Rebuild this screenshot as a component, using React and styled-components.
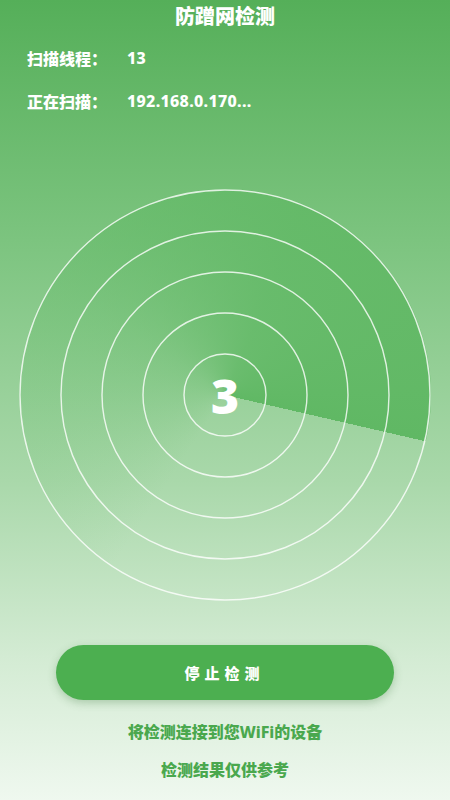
import styled, { createGlobalStyle } from 'styled-components'

const GlobalStyle = createGlobalStyle`
  html, body {
    margin: 0;
    padding: 0;
  }
  body {
    font-family: "Noto Sans", "Noto Sans CJK SC", sans-serif;
  }
`

const Page = styled.div`
  width: 450px;
  height: 800px;
  overflow: hidden;
  display: flex;
  flex-direction: column;
  background: linear-gradient(180deg, #55af59 0%, #7cc47f 30%, #a9d8aa 60%, #d3ebd3 82%, #eff8ef 100%);
`

const Title = styled.h1`
  margin: 0;
  height: 34px;
  line-height: 34px;
  text-align: center;
  color: #fff;
  font-size: 20px;
  font-weight: 800;
`

const InfoRow = styled.div`
  display: flex;
  align-items: center;
  height: 24px;
  padding: 0 27px;
  margin-top: ${props => props.gap}px;
  color: #fff;
  font-size: 16px;
  font-weight: 800;
`

const Label = styled.span`
  width: 100px;
`

const Value = styled.span`
  letter-spacing: 0.3px;
`

const Radar = styled.div`
  position: relative;
  width: 412px;
  height: 412px;
  margin: 76px auto 0;
  flex-shrink: 0;
`

const Sweep = styled.div`
  position: absolute;
  inset: 0;
  border-radius: 50%;
  background: conic-gradient(
    from 103deg,
    rgba(96, 184, 100, 0) 0deg,
    rgba(96, 184, 100, 0) 110deg,
    rgba(96, 184, 100, 0.35) 200deg,
    rgba(96, 184, 100, 0.8) 280deg,
    rgba(96, 184, 100, 1) 360deg
  );
`

const Rings = styled.svg`
  position: absolute;
  inset: 0;
`

const Count = styled.div`
  position: absolute;
  inset: 0;
  display: flex;
  align-items: center;
  justify-content: center;
  color: #fff;
  font-family: "Noto Sans", sans-serif;
  font-size: 48px;
  font-weight: 900;
`

const StopButton = styled.button`
  align-self: center;
  width: 338px;
  height: 55px;
  margin-top: 44px;
  border: none;
  border-radius: 28px;
  background: #4caf50;
  box-shadow: 0 3px 8px rgba(60, 120, 60, 0.3);
  color: #fff;
  font-family: "Noto Sans CJK SC", sans-serif;
  font-size: 15px;
  font-weight: 800;
  letter-spacing: 5px;
  padding-left: 5px;
`

const Note = styled.p`
  margin: ${props => props.gap}px 0 0;
  height: 22px;
  line-height: 22px;
  text-align: center;
  color: #4aa84e;
  font-size: 16px;
  font-weight: 800;
`

const radii = [205, 164, 123, 82, 41]

export default function App() {
  return (
    <Page>
      <GlobalStyle />
      <Title>防蹭网检测</Title>
      <InfoRow gap={12}>
        <Label>扫描线程：</Label>
        <Value>13</Value>
      </InfoRow>
      <InfoRow gap={19}>
        <Label>正在扫描：</Label>
        <Value>192.168.0.170...</Value>
      </InfoRow>
      <Radar>
        <Sweep />
        <Rings width="412" height="412" viewBox="0 0 412 412">
          {radii.map(r => (
            <circle key={r} cx="206" cy="206" r={r} fill="none" stroke="rgba(255,255,255,0.8)" strokeWidth="1.4" />
          ))}
        </Rings>
        <Count>3</Count>
      </Radar>
      <StopButton>停止检测</StopButton>
      <Note gap={21}>将检测连接到您WiFi的设备</Note>
      <Note gap={16}>检测结果仅供参考</Note>
    </Page>
  )
}
